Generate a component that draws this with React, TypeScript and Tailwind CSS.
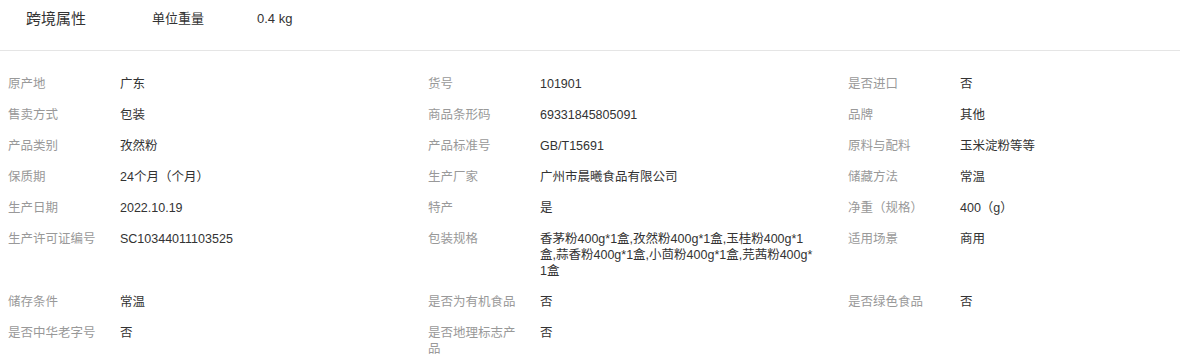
import React from "react";

const rows: [string, string][][] = [
  [["原产地", "广东"], ["货号", "101901"], ["是否进口", "否"]],
  [["售卖方式", "包装"], ["商品条形码", "69331845805091"], ["品牌", "其他"]],
  [["产品类别", "孜然粉"], ["产品标准号", "GB/T15691"], ["原料与配料", "玉米淀粉等等"]],
  [["保质期", "24个月（个月）"], ["生产厂家", "广州市晨曦食品有限公司"], ["储藏方法", "常温"]],
  [["生产日期", "2022.10.19"], ["特产", "是"], ["净重（规格）", "400（g）"]],
  [
    ["生产许可证编号", "SC10344011103525"],
    ["包装规格", "香茅粉400g*1盒,孜然粉400g*1盒,玉桂粉400g*1盒,蒜香粉400g*1盒,小茴粉400g*1盒,芫茜粉400g*1盒"],
    ["适用场景", "商用"],
  ],
  [["储存条件", "常温"], ["是否为有机食品", "否"], ["是否绿色食品", "否"]],
  [["是否中华老字号", "否"], ["是否地理标志产品", "否"], ["", ""]],
];

export default function App() {
  return (
    <div
      className="w-[1180px] h-[354px] overflow-hidden bg-white text-[#333]"
      style={{ fontFamily: '"Liberation Sans", "Noto Sans CJK SC", sans-serif' }}
    >
      <div className="h-[50px] flex items-start pt-[9px] pl-[26px] text-[13px] leading-[20px]">
        <div className="w-[126px] text-[15px]">跨境属性</div>
        <div className="w-[105px]">单位重量</div>
        <div>0.4 kg</div>
      </div>
      <div className="h-px bg-[#e5e5e5]" />
      <div className="grid grid-cols-[420px_420px_340px] pt-[17px] text-[12.5px] leading-[16px]">
        {rows.flat().map(([label, value], i) => (
          <div key={i} className="flex pl-[8px] pt-[8px] pb-[7px]">
            <div className="w-[112px] shrink-0 pr-[20px] text-[#999]">{label}</div>
            <div className="w-[278px] break-all text-[#333]">{value}</div>
          </div>
        ))}
      </div>
    </div>
  );
}
